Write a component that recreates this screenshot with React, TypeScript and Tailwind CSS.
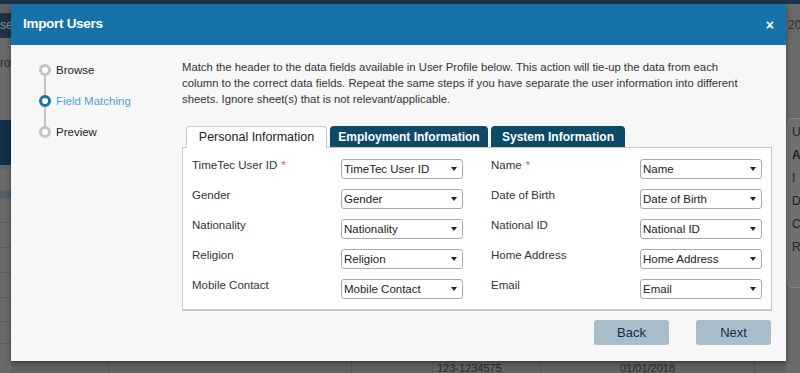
const leftFields = [
  { label: 'TimeTec User ID', required: true },
  { label: 'Gender' },
  { label: 'Nationality' },
  { label: 'Religion' },
  { label: 'Mobile Contact' },
];

const rightFields = [
  { label: 'Name', required: true },
  { label: 'Date of Birth' },
  { label: 'National ID' },
  { label: 'Home Address' },
  { label: 'Email' },
];

const steps = [
  { name: 'Browse', active: false },
  { name: 'Field Matching', active: true },
  { name: 'Preview', active: false },
];

function FakeSelect({ value }: { value: string }) {
  return (
    <div className="flex h-[20px] w-[122px] items-center justify-between rounded-[3px] border border-[#a9a9a9] bg-white pl-[2px] pr-[5px] text-[11.5px] text-[#222]">
      <span className="leading-[18px]">{value}</span>
      <span className="h-0 w-0 border-x-[3.5px] border-t-[4px] border-x-transparent border-t-[#222]" />
    </div>
  );
}

function FieldRow({ label, required }: { label: string; required?: boolean }) {
  return (
    <div className="flex h-[20px] items-start">
      <div className="-mt-[4px] w-[149px] text-[11.5px] leading-[20px] text-[#333]">
        {label}
        {required && <span className="ml-[4px] text-[#e05a5a]">*</span>}
      </div>
      <FakeSelect value={label} />
    </div>
  );
}

export default function App() {
  return (
    <div
      className="relative h-[373px] w-[800px] overflow-hidden bg-[#666]"
      style={{ fontFamily: '"Liberation Sans", Arial, sans-serif' }}
    >
      {/* backdrop page (dimmed) */}
      <div className="flex h-full w-full">
        <div className="flex w-[11px] flex-col">
          <div className="h-[4px] bg-[#1b3447]" />
          <div className="h-[9px] bg-[#616161]" />
          <div className="h-[25px] bg-[#1f3344] text-[12px] leading-[25px] text-[#8a94a0] whitespace-nowrap">se</div>
          <div className="h-[82px] bg-[#6b6b6b] pt-[16px] text-[12px] text-[#2a2a2a] whitespace-nowrap">rof</div>
          <div className="h-[45px] bg-[#13304a]" />
          <div className="h-[5px] bg-[#5c6670]" />
          <div className="h-[20px] bg-[#6a6a6a]" />
          <div className="h-[8px] bg-[#56606a]" />
          <div className="flex flex-1 flex-col bg-[#696969]">
            <div className="h-[25px] border-b border-[#5a5a5a]" />
            <div className="h-[25px] border-b border-[#5a5a5a]" />
            <div className="h-[25px] border-b border-[#5a5a5a]" />
            <div className="h-[25px] border-b border-[#5a5a5a]" />
            <div className="h-[24px] border-b border-[#5a5a5a]" />
            <div className="h-[22px] border-b border-[#5a5a5a]" />
          </div>
        </div>
        <div className="flex flex-1 flex-col">
          <div className="h-[4px] bg-[#1b3447]" />
          <div className="flex-1 bg-[#686868]" />
          <div className="flex h-[12px] border-t border-[#555] bg-[#626262] text-[11px] leading-[12px] text-[#2b2b2b]">
            <div className="w-[98px] border-r border-[#555]" />
            <div className="w-[243px] border-r border-[#555]" />
            <div className="w-[81px] border-r border-[#555]" />
            <div className="w-[108px] border-r border-[#555] pl-[4px] whitespace-nowrap">123-1234575</div>
            <div className="w-[214px] border-r border-[#555] pl-[79px] whitespace-nowrap">01/01/2018</div>
          </div>
        </div>
        <div className="flex w-[14px] flex-col bg-[#6a6a6a]">
          <div className="h-[4px] bg-[#1b3447]" />
          <div className="h-[52px] pt-[12px] pl-[2px] text-[12px] text-[#2a2a2a] whitespace-nowrap">20</div>
          <div className="h-[62px]" />
          <div className="ml-[1px] flex h-[170px] flex-col gap-[8px] rounded-l-[6px] border border-r-0 border-[#858585] bg-[#707070] pl-[4px] pt-[6px] text-[12px] leading-[15px] text-[#222]">
            <span>U</span>
            <span className="font-bold">A</span>
            <span>I</span>
            <span>D</span>
            <span>C</span>
            <span>R</span>
          </div>
        </div>
      </div>

      {/* modal */}
      <div className="absolute left-[11px] top-[4px] flex h-[357px] w-[775px] flex-col bg-[#f7f7f7] shadow-[0_2px_6px_rgba(0,0,0,0.4)]">
        <div className="flex h-[41px] items-center justify-between bg-[#1872aa] pl-[12px] pr-[12px]">
          <span className="text-[13.5px] font-bold tracking-[-0.3px] text-white">Import Users</span>
          <span className="text-[14px] font-bold leading-none text-white">×</span>
        </div>

        <div className="flex flex-1">
          {/* stepper */}
          <div className="w-[171px] pl-[28px] pt-[19px]">
            <div className="relative flex flex-col gap-[19px]">
              <div className="absolute left-[5px] top-[6px] h-[62px] w-[2px] bg-[#c4c4c4]" />
              {steps.map((s) => (
                <div key={s.name} className="relative flex h-[12px] items-center gap-[5px]">
                  <div
                    className={
                      s.active
                        ? 'h-[12px] w-[12px] rounded-full border-[3px] border-[#1872aa] bg-white'
                        : 'h-[12px] w-[12px] rounded-full border-[3px] border-[#c4c4c4] bg-white'
                    }
                  />
                  <span
                    className={
                      s.active
                        ? 'text-[11.5px] leading-[12px] text-[#4fa3d8]'
                        : 'text-[11.5px] leading-[12px] text-[#222]'
                    }
                  >
                    {s.name}
                  </span>
                </div>
              ))}
            </div>
          </div>

          {/* content */}
          <div className="flex w-[590px] flex-col pt-[14px]">
            <p className="w-[566px] text-[11.3px] leading-[16px] text-[#333]">
              Match the header to the data fields available in User Profile below. This action will tie-up the data from each
              column to the correct data fields. Repeat the same steps if you have separate the user information into different
              sheets. Ignore sheet(s) that is not relevant/applicable.
            </p>

            <div className="mt-[19px] flex items-end gap-[3px] pl-[4px]">
              <div className="relative z-10 -mb-px flex h-[22px] w-[141px] items-center justify-center rounded-t-[4px] border border-b-0 border-[#c8c8c8] bg-white text-[12.5px] text-[#222]">
                Personal Information
              </div>
              <div className="flex h-[21px] w-[158px] items-center justify-center rounded-t-[4px] bg-[#0d4a67] text-[12px] font-bold text-white">
                Employment Information
              </div>
              <div className="flex h-[21px] w-[134px] items-center justify-center rounded-t-[4px] bg-[#0d4a67] text-[12px] font-bold text-white">
                System Information
              </div>
            </div>

            <div className="flex gap-[28px] border border-b-2 border-[#c8c8c8] bg-white pb-[10px] pl-[9px] pt-[11px]">
              <div className="flex flex-col gap-[10px]">
                {leftFields.map((f) => (
                  <FieldRow key={f.label} label={f.label} required={f.required} />
                ))}
              </div>
              <div className="flex flex-col gap-[10px]">
                {rightFields.map((f) => (
                  <FieldRow key={f.label} label={f.label} required={f.required} />
                ))}
              </div>
            </div>

            <div className="mt-[9px] flex justify-end gap-[27px] pr-[1px]">
              <button className="h-[25px] w-[75px] rounded-[3px] bg-[#a8bcca] text-[13px] text-[#1b2848]">Back</button>
              <button className="h-[25px] w-[75px] rounded-[3px] bg-[#a8bcca] text-[13px] text-[#1b2848]">Next</button>
            </div>
          </div>
        </div>
      </div>
    </div>
  );
}
